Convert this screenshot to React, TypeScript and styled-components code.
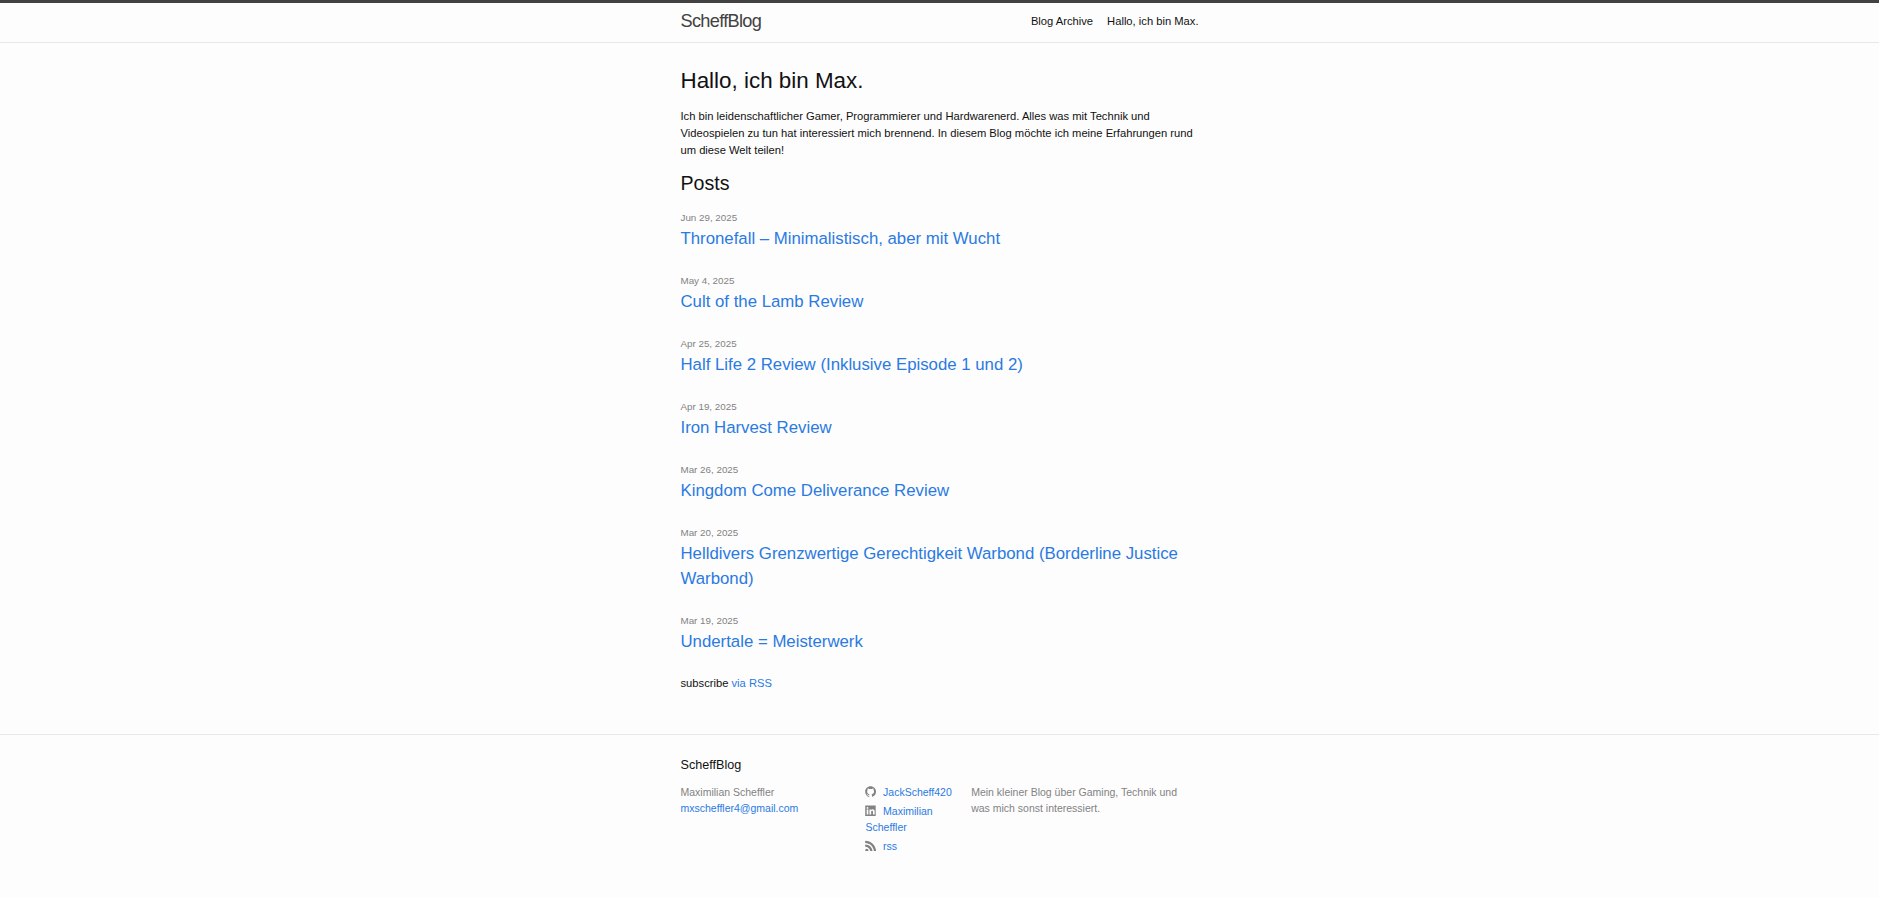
import styled, { createGlobalStyle } from 'styled-components';

const GlobalStyle = createGlobalStyle`
    html, body {
        margin: 0;
        padding: 0;
    }

    body {
        background: #fdfdfd;
        color: #111;
        font-family: "Liberation Sans", Arial, sans-serif;
        font-size: 11.2px;
        line-height: 16.8px;
    }

    a {
        color: #2a7ae2;
        text-decoration: none;
    }
`;

const Page = styled.div`
    display: flex;
    flex-direction: column;
    min-height: 897px;
`;

const Wrapper = styled.div`
    box-sizing: border-box;
    width: 560px;
    margin: 0 auto;
    padding: 0 21px;
`;

const Header = styled.header`
    border-top: 3.5px solid #424242;
    border-bottom: 0.7px solid #e8e8e8;
    min-height: 39.2px;
`;

const HeaderRow = styled(Wrapper)`
    display: flex;
    justify-content: space-between;
`;

const SiteTitle = styled.a`
    color: #424242;
    font-size: 18.2px;
    font-weight: 300;
    letter-spacing: -0.7px;
    line-height: 37.8px;
`;

const Nav = styled.nav`
    display: flex;
    gap: 14px;
    line-height: 37.8px;
`;

const NavLink = styled.a`
    color: #111;
`;

const Main = styled.main`
    flex: 1;
    padding: 21px 0;
`;

const Heading = styled.h1`
    margin: 0 0 10.5px;
    font-size: 22.4px;
    font-weight: 400;
    line-height: 33.6px;
`;

const Intro = styled.p`
    margin: 0 0 10.5px;
`;

const ListHeading = styled.h2`
    margin: 0 0 10.5px;
    font-size: 19.6px;
    font-weight: 400;
    line-height: 29.4px;
`;

const PostList = styled.ul`
    margin: 0;
    padding: 0;
    list-style: none;
`;

const PostItem = styled.li`
    margin-bottom: 21px;
`;

const PostDate = styled.span`
    display: block;
    padding-top: 1px;
    color: #828282;
    font-size: 9.8px;
    line-height: 15.8px;
`;

const PostTitle = styled.h3`
    margin: 0;
    font-size: 16.8px;
    font-weight: 400;
    line-height: 25.2px;
`;

const Subscribe = styled.p`
    margin: 0 0 10.5px;
`;

const Footer = styled.footer`
    border-top: 0.7px solid #e8e8e8;
    padding: 21px 0 31.5px;
`;

const FooterHeading = styled.h2`
    margin: 0 0 10.5px;
    font-size: 12.6px;
    font-weight: 400;
    line-height: 18.9px;
`;

const FooterCols = styled.div`
    display: flex;
    margin-left: -10.5px;
    color: #828282;
    font-size: 10.5px;
    line-height: 15.75px;
`;

const FooterCol = styled.div<{ $share: number }>`
    box-sizing: border-box;
    width: ${p => p.$share}%;
    margin-bottom: 10.5px;
    padding-left: 10.5px;
`;

const PlainList = styled.ul`
    margin: 0;
    padding: 0;
    list-style: none;
`;

const SocialList = styled(PlainList)`
    li + li {
        padding-top: 3.5px;
    }
`;

const SvgIcon = styled.svg`
    display: inline-block;
    width: 11.2px;
    height: 11.2px;
    padding-right: 3.5px;
    fill: #828282;
    vertical-align: text-top;
`;

const GithubIcon = () => (
    <SvgIcon viewBox="0 0 16 16">
        <path d="M7.999,0.431c-4.285,0-7.76,3.474-7.76,7.761c0,3.428,2.223,6.337,5.307,7.363c0.388,0.071,0.53-0.168,0.53-0.374c0-0.184-0.007-0.672-0.01-1.32c-2.159,0.469-2.614-1.04-2.614-1.04c-0.353-0.896-0.862-1.135-0.862-1.135c-0.705-0.481,0.053-0.472,0.053-0.472c0.779,0.055,1.189,0.8,1.189,0.8c0.692,1.186,1.816,0.843,2.258,0.645c0.071-0.502,0.271-0.843,0.493-1.037C4.86,11.425,3.049,10.76,3.049,7.786c0-0.847,0.302-1.54,0.799-2.082C3.768,5.507,3.501,4.718,3.924,3.65c0,0,0.652-0.209,2.134,0.796C6.677,4.273,7.34,4.187,8,4.184c0.659,0.003,1.323,0.089,1.943,0.261c1.482-1.004,2.132-0.796,2.132-0.796c0.423,1.068,0.157,1.857,0.077,2.054c0.497,0.542,0.798,1.235,0.798,2.082c0,2.981-1.814,3.637-3.543,3.829c0.279,0.24,0.527,0.713,0.527,1.437c0,1.037-0.01,1.874-0.01,2.129c0,0.208,0.14,0.449,0.534,0.373c3.081-1.028,5.302-3.935,5.302-7.362C15.76,3.906,12.285,0.431,7.999,0.431z" />
    </SvgIcon>
);

const LinkedinIcon = () => (
    <SvgIcon viewBox="0 0 16 16">
        <path d="M0.300 0.600h15v15h-15zM2.400 6.300v7.300h2.400V6.300zm1.200-3.500a1.350 1.350 0 1 0 0 2.700 1.350 1.350 0 0 0 0-2.700zM6.400 6.300v7.300h2.400V9.800c0-1 .5-1.700 1.400-1.700.9 0 1.200.7 1.200 1.700v3.800h2.400V9.300c0-2.200-1.200-3.200-2.900-3.200-1 0-1.700.5-2.100 1.100V6.300z" />
    </SvgIcon>
);

// the dot runs past the bottom of the box and gets clipped, as in the reference
const RssIcon = () => (
    <SvgIcon viewBox="0 0 16 16">
        <path d="M0.300 1c8.800 0 15.700 7.200 15.700 16h-3.200C12.800 10 7.300 4.200 0.300 4.200zM0.300 6.600c5.800 0 10.500 4.700 10.500 10.500H7.600C7.600 13 4.400 9.800 0.300 9.800zM2.600 12.500a2.300 2.300 0 1 1 0 4.600 2.300 2.300 0 0 1 0-4.600z" />
    </SvgIcon>
);

const posts = [
    { date: 'Jun 29, 2025', title: 'Thronefall – Minimalistisch, aber mit Wucht' },
    { date: 'May 4, 2025', title: 'Cult of the Lamb Review' },
    { date: 'Apr 25, 2025', title: 'Half Life 2 Review (Inklusive Episode 1 und 2)' },
    { date: 'Apr 19, 2025', title: 'Iron Harvest Review' },
    { date: 'Mar 26, 2025', title: 'Kingdom Come Deliverance Review' },
    { date: 'Mar 20, 2025', title: 'Helldivers Grenzwertige Gerechtigkeit Warbond (Borderline Justice Warbond)' },
    { date: 'Mar 19, 2025', title: 'Undertale = Meisterwerk' },
];

export default function App() {
    return (
        <Page>
            <GlobalStyle />
            <Header>
                <HeaderRow>
                    <SiteTitle href="#">ScheffBlog</SiteTitle>
                    <Nav>
                        <NavLink href="#">Blog Archive</NavLink>
                        <NavLink href="#">Hallo, ich bin Max.</NavLink>
                    </Nav>
                </HeaderRow>
            </Header>
            <Main>
                <Wrapper>
                    <Heading>Hallo, ich bin Max.</Heading>
                    <Intro>
                        Ich bin leidenschaftlicher Gamer, Programmierer und Hardwarenerd. Alles was mit Technik und
                        Videospielen zu tun hat interessiert mich brennend. In diesem Blog möchte ich meine Erfahrungen
                        rund um diese Welt teilen!
                    </Intro>
                    <ListHeading>Posts</ListHeading>
                    <PostList>
                        {posts.map(post => (
                            <PostItem key={post.title}>
                                <PostDate>{post.date}</PostDate>
                                <PostTitle>
                                    <a href="#">{post.title}</a>
                                </PostTitle>
                            </PostItem>
                        ))}
                    </PostList>
                    <Subscribe>
                        subscribe <a href="#">via RSS</a>
                    </Subscribe>
                </Wrapper>
            </Main>
            <Footer>
                <Wrapper>
                    <FooterHeading>ScheffBlog</FooterHeading>
                    <FooterCols>
                        <FooterCol $share={35}>
                            <PlainList>
                                <li>Maximilian Scheffler</li>
                                <li>
                                    <a href="#">mxscheffler4@gmail.com</a>
                                </li>
                            </PlainList>
                        </FooterCol>
                        <FooterCol $share={20}>
                            <SocialList>
                                <li>
                                    <a href="#">
                                        <GithubIcon /> JackScheff420
                                    </a>
                                </li>
                                <li>
                                    <a href="#">
                                        <LinkedinIcon /> Maximilian Scheffler
                                    </a>
                                </li>
                                <li>
                                    <a href="#">
                                        <RssIcon /> rss
                                    </a>
                                </li>
                            </SocialList>
                        </FooterCol>
                        <FooterCol $share={45}>Mein kleiner Blog über Gaming, Technik und was mich sonst interessiert.</FooterCol>
                    </FooterCols>
                </Wrapper>
            </Footer>
        </Page>
    );
}
